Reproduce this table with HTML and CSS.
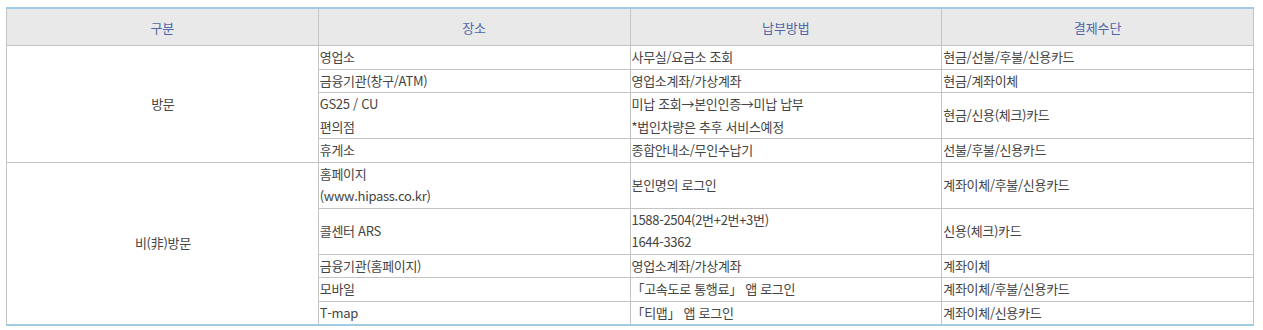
FILE: index.html
```html
<!DOCTYPE html>
<html lang="ko">
<head>
<meta charset="utf-8">
<link rel="stylesheet" href="styles.css">
</head>
<body>
<div class="wrap">
<table class="pay">
  <colgroup><col class="c"><col class="c"><col class="c"><col class="c"></colgroup>
  <thead>
    <tr><th>구분</th><th>장소</th><th>납부방법</th><th>결제수단</th></tr>
  </thead>
  <tbody>
    <tr><td rowspan="4" class="grp">방문</td><td>영업소</td><td>사무실/요금소 조회</td><td>현금/선불/후불/신용카드</td></tr>
    <tr><td>금융기관(창구/ATM)</td><td>영업소계좌/가상계좌</td><td>현금/계좌이체</td></tr>
    <tr><td>GS25 / CU<br>편의점</td><td>미납 조회→본인인증→미납 납부<br><span class="note">*법인차량은 추후 서비스예정</span></td><td>현금/신용(체크)카드</td></tr>
    <tr><td>휴게소</td><td>종합안내소/무인수납기</td><td>선불/후불/신용카드</td></tr>
    <tr><td rowspan="5" class="grp">비(非)방문</td><td>홈페이지<br>(www.hipass.co.kr)</td><td>본인명의 로그인</td><td>계좌이체/후불/신용카드</td></tr>
    <tr><td>콜센터 ARS</td><td>1588-2504(2번+2번+3번)<br>1644-3362</td><td>신용(체크)카드</td></tr>
    <tr><td>금융기관(홈페이지)</td><td>영업소계좌/가상계좌</td><td>계좌이체</td></tr>
    <tr><td>모바일</td><td>「고속도로 통행료」 앱 로그인</td><td>계좌이체/후불/신용카드</td></tr>
    <tr><td>T-map</td><td>「티맵」 앱 로그인</td><td>계좌이체/신용카드</td></tr>
  </tbody>
</table>
</div>
</body>
</html>
```
FILE: styles.css
```css
html, body {
  margin: 0;
  padding: 0;
  background: #fff;
}
.wrap {
  padding: 7px 0 0 6px;
}
.pay {
  width: 1248px;
  border-collapse: collapse;
  table-layout: fixed;
  font-family: "Noto Sans CJK KR", "Noto Sans", sans-serif;
  font-size: 13px;
  color: #444;
  border-top: 2px solid #9fcbe3;
  border-bottom: 2px solid #9fcbe3;
  border-left: 1px solid #c4c4c4;
  border-right: 1px solid #c4c4c4;
}
.pay col.c {
  width: 25%;
}
.pay th {
  height: 36px;
  padding: 0;
  background: #e9e9e9;
  color: #4f67a6;
  font-weight: 400;
  text-align: center;
  vertical-align: middle;
  border: 1px solid #c4c4c4;
  border-top: none;
}
.pay td {
  padding: 0 0 0 1px;
  line-height: 22.5px;
  text-align: left;
  vertical-align: middle;
  border: 1px solid #c4c4c4;
  letter-spacing: -0.3px;
}
.pay td.grp {
  text-align: center;
}
.pay tbody tr:last-child td {
  border-bottom: none;
}
```
